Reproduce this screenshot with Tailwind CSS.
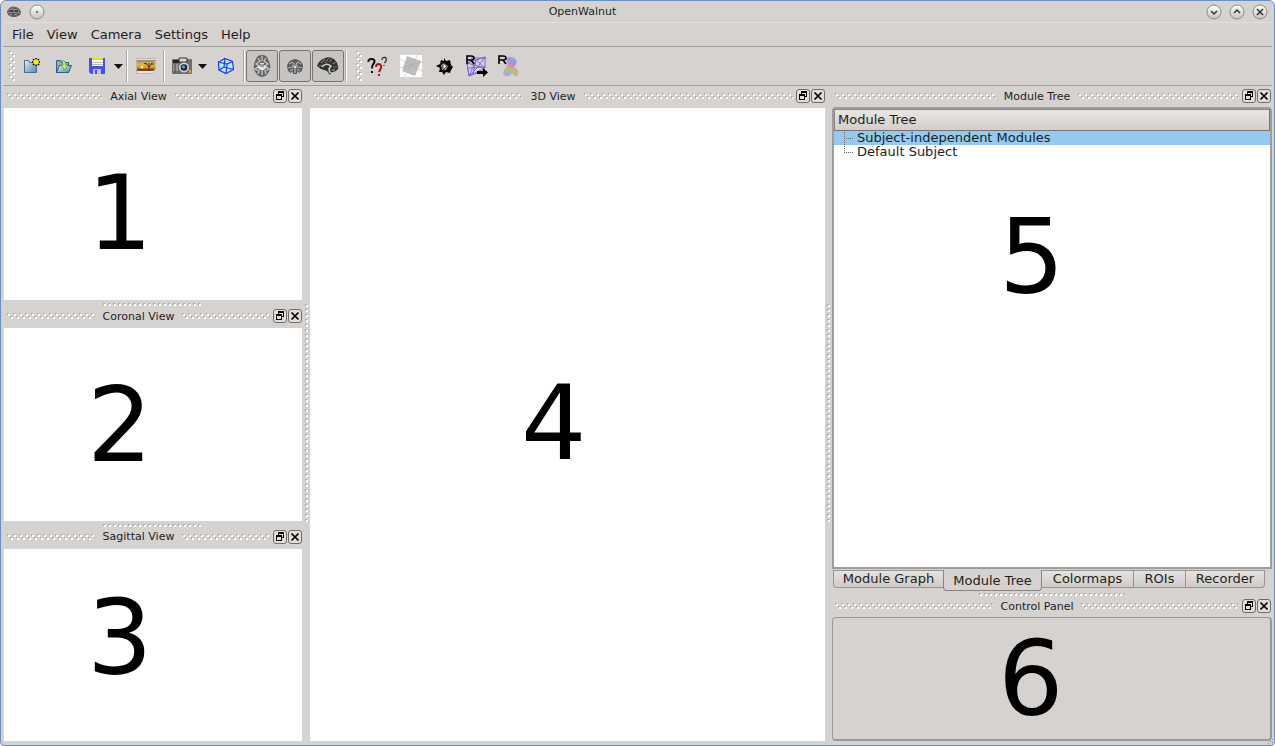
<!DOCTYPE html>
<html lang="en">
<head>
<meta charset="utf-8">
<title>OpenWalnut</title>
<script src="https://cdn.jsdelivr.net/npm/@tailwindcss/browser@4"></script>
</head>
<body class="h-screen overflow-hidden bg-white font-['DejaVu_Sans',sans-serif] text-[13px] text-[#221e1e]">
<svg class="absolute size-0" aria-hidden="true">
  <defs>
    <pattern id="grip" width="6" height="6" patternUnits="userSpaceOnUse">
      <path d="M0 0h2v2H0zM3 3h2v2H3z" fill="#b4b0ad"/><path d="M1 1h2v2H1zM4 4h2v2H4z" fill="#fff"/>
    </pattern>
    <pattern id="dots" width="5" height="5" patternUnits="userSpaceOnUse">
      <path d="M0 0h2v2H0z" fill="#b0aca9"/><path d="M1 1h2v2H1z" fill="#fff"/>
    </pattern>
    <linearGradient id="ball" x2="0" y2="1"><stop stop-color="#fff"/><stop offset="1" stop-color="#c4c0bd"/></linearGradient>
    <linearGradient id="folder" x2="1" y2="1"><stop stop-color="#e6eef4"/><stop offset="1" stop-color="#5d86a8"/></linearGradient>
    <linearGradient id="sunset" x2="0" y2="1"><stop stop-color="#8d8a7c"/><stop offset=".5" stop-color="#e8b050"/><stop offset=".85" stop-color="#e0901c"/><stop offset="1" stop-color="#8a5a20"/></linearGradient>
    <linearGradient id="glyph" x1=".8" y1="0" x2=".4" y2="1"><stop stop-color="#8fe0b0"/><stop offset=".25" stop-color="#8f9ae8"/><stop offset=".5" stop-color="#d88ab0"/><stop offset=".7" stop-color="#a8c878"/><stop offset="1" stop-color="#b8a0e0"/></linearGradient>
    <symbol id="float" viewBox="0 0 14 14"><rect x=".5" y=".5" width="13" height="13" rx="2.500" fill="#e0ddda" stroke="#6f6c6a"/><path d="M5 2h6v6H9V7h1V4H6v1H5zM3 5h6v6H3zM4 7v3h4V7z" fill="#000" fill-rule="evenodd"/></symbol>
    <symbol id="close" viewBox="0 0 14 14"><rect x=".5" y=".5" width="13" height="13" rx="2.500" fill="#e0ddda" stroke="#6f6c6a"/><path d="M3.500 3.500l7 7M10.500 3.500l-7 7" fill="none" stroke="#000" stroke-width="1.700"/></symbol>
  </defs>
</svg>
<div class="relative flex h-full flex-col rounded-t-md rounded-b-sm border border-[#6b8fc3] bg-[#d6d2cf] px-[2px] pb-1">
  <header class="relative flex h-[22px] shrink-0 items-center justify-center border-b border-[#e2dfdc] pt-[1px] pr-[110px] text-[11px]">
    <div class="absolute inset-y-0 left-1 flex items-center gap-2">
      <svg class="size-[14px]" viewBox="0 0 14 14"><path d="M0 7Q1 3 5 1.500Q10 1 12.500 4Q15 7 13 10L9 12H5L1 10Z" fill="#605d5b"/><path d="M2 5l3-1 2 1 3-1 2 2M1 8l3-1 3 1 3-1 3 1M3 10l3-1 4 1M6 2v3" stroke="#9a9692" fill="none"/><path d="M3 6h3M8 6h3M5 9h2" stroke="#222"/></svg>
      <button aria-label="Window menu" class="size-4"><svg viewBox="0 0 16 16"><circle cx="8" cy="8" r="7" fill="url(#ball)" stroke="#8c8986"/><path d="M7 7h2v2H7z" fill="#777"/></svg></button>
    </div>
    <h1>OpenWalnut</h1>
    <div class="absolute inset-y-0 right-1 flex items-center gap-[7px]">
      <button aria-label="Minimize" class="size-4"><svg viewBox="0 0 16 16"><circle cx="8" cy="8" r="7" fill="url(#ball)" stroke="#8c8986"/><path d="M5 7l3 3 3-3" fill="none" stroke="#333" stroke-width="1.500"/></svg></button>
      <button aria-label="Maximize" class="size-4"><svg viewBox="0 0 16 16"><circle cx="8" cy="8" r="7" fill="url(#ball)" stroke="#8c8986"/><path d="M5 9l3-3 3 3" fill="none" stroke="#333" stroke-width="1.500"/></svg></button>
      <button aria-label="Close" class="size-4"><svg viewBox="0 0 16 16"><circle cx="8" cy="8" r="7" fill="url(#ball)" stroke="#8c8986"/><path d="M5 5l6 6M11 5l-6 6" fill="none" stroke="#333" stroke-width="1.500"/></svg></button>
    </div>
  </header>
  <nav class="flex h-6 shrink-0 items-center gap-[13px] border-b border-[#a5a19e] px-[9px]">
    <button>File</button><button>View</button><button>Camera</button><button>Settings</button><button>Help</button>
  </nav>
  <div role="toolbar" aria-label="Main toolbar" class="flex h-[39px] shrink-0 items-center border-b border-[#a5a19e]">
    <svg class="ml-[6px] mr-[1px] h-[30px] w-[6px]"><rect width="6" height="30" fill="url(#grip)"/></svg>
    <button aria-label="New" class="grid size-8 place-items-center"><svg class="size-[18px]" viewBox="0 0 18 18"><path d="M1.500 15.500v-12h4l1 2h7v10z" fill="url(#folder)" stroke="#3e6f91"/><path d="M9 5h8M13 1v8M10 2l6 6M16 2l-6 6" stroke="#000" stroke-width="1.500"/><path d="M10 5h6M13 2v6M11 3l4 4M15 3l-4 4" stroke="#fff200" stroke-width="1.300"/></svg></button>
    <button aria-label="Open" class="grid size-8 place-items-center"><svg class="size-[18px]" viewBox="0 0 18 18"><path d="M1.500 15.500v-12h4l1 2h7v10z" fill="#8fb0c6" stroke="#2d5f80"/><path d="M1.500 15.500l3-7h12l-3 7z" fill="url(#folder)" stroke="#2d5f80"/><path d="M6 4q5-1 5 4h2l-3.500 5L6 8h2q0-3-2-4z" fill="#b8f26a" stroke="#4b873a" stroke-width=".7"/></svg></button>
    <button aria-label="Save" class="grid h-8 w-[33px] place-items-center"><svg class="size-4" viewBox="0 0 16 16"><path d="M0 0h16v16H2l-2-2z" fill="#4450f0"/><path d="M3 0h11v8H3z" fill="#fff"/><path d="M3 0h11v2H3z" fill="#eee000"/><path d="M3 4.500h11M3 6.500h11" stroke="#bbb"/><path d="M4 11h8v5H4z" fill="#c4c4c8"/><path d="M6 12h2v4H6z" fill="#4450f0"/></svg></button>
    <button aria-label="Save options" class="grid h-8 w-[11px] place-items-center"><svg class="h-[5px] w-[9px]" viewBox="0 0 9 5"><path d="M0 0h9L4.500 5z" fill="#111"/></svg></button>
    <span class="mx-[2px] h-8 w-[2px] border-l border-[#aaa6a3] bg-white"></span>
    <button aria-label="Load image" class="grid size-8 place-items-center"><svg class="h-4 w-5" viewBox="0 0 20 16"><path d="M.5.5h19v11l-3 4H.5z" fill="#e8e3d7" stroke="#bdb9b1"/><path d="M1 2h18v9H1z" fill="url(#sunset)"/><path d="M1 11h18l-2 2H1z" fill="#6b4a24"/><path d="M13 12V8M13 9l-3-4M13 9l3-4M11 6L8 5.500M15 6h3M13 8V5" stroke="#40301c" stroke-width=".9" fill="none"/><circle cx="6" cy="9" r="1.500" fill="#ffe88a"/></svg></button>
    <span class="mx-[1px] h-8 w-[2px] border-l border-[#aaa6a3] bg-white"></span>
    <button aria-label="Screenshot" class="grid h-8 w-[31px] place-items-center"><svg class="h-[18px] w-5" viewBox="0 0 20 18"><rect y="2" width="20" height="15" rx="1" fill="#6e706f"/><path d="M1 3h6v3H1z" fill="#222"/><path d="M7 1h8v4H7z" fill="#d8d8d5" stroke="#333"/><path d="M1 7h5v7H1z" fill="#989a99"/><circle cx="12" cy="10.500" r="5" fill="#d0d2d3"/><circle cx="12" cy="10.500" r="3.300" fill="#182838"/><circle cx="11.500" cy="10" r="1.600" fill="#6ca0d0"/><path d="M17 13h2v3h-2z" fill="#e7a426"/><path d="M3 7v9" stroke="#444"/></svg></button>
    <button aria-label="Screenshot options" class="grid h-8 w-[11px] place-items-center"><svg class="h-[5px] w-[9px]" viewBox="0 0 9 5"><path d="M0 0h9L4.500 5z" fill="#111"/></svg></button>
    <button aria-label="Reset view" class="ml-[2px] grid size-8 place-items-center"><svg class="h-[18px] w-[18px]" viewBox="0 0 18 18"><path d="M8 1.500l7.500 3 1 8L9 16.500 2 13 1.500 5z" fill="#a9f4ff" stroke="#2530ff" stroke-width="1.200"/><path d="M1.500 5L10 7l5.500-2.500M10 7l-1 9.500M8 1.500L7 10l-5 3M7 10l9.500 2.500" fill="none" stroke="#2530ff" stroke-width="1.200"/></svg></button>
    <span class="mx-[1px] h-8 w-[2px] border-l border-[#aaa6a3] bg-white"></span>
    <div class="flex gap-[1px]">
      <button aria-label="Axial slice" aria-pressed="true" class="grid size-8 place-items-center rounded-[3px] border border-[#777471] bg-[#c8c4c1]"><svg class="h-[22px] w-[18px]" viewBox="0 0 18 22"><path d="M9 0Q14 0 15 4Q18 9 17 14Q15 21 9 22Q3 21 1 14Q0 9 3 4Q4 0 9 0Z" fill="#666"/><path d="M9 1v5M5 3l2 3-4 3 3 2-4 3 4 2-1 3M13 3l-2 3 4 3-3 2 4 3-4 2 1 3M9 13v7" fill="none" stroke="#c9c9c9" stroke-width="1.300"/><path d="M7 8h4v2l3 2-3 3H7l-3-3 3-2z" fill="#e2e2e2"/><path d="M8 9v3M10 9v3" stroke="#555"/></svg></button>
      <button aria-label="Coronal slice" aria-pressed="true" class="grid size-8 place-items-center rounded-[3px] border border-[#777471] bg-[#c8c4c1]"><svg class="h-[15px] w-[18px]" viewBox="0 0 18 15"><path d="M1 7Q2 2 6 1Q9-1 12 1Q16 2 17 7L16 12l-3 2-2-2v3H7v-3l-2 2-3-2z" fill="#5a5a5a"/><path d="M3 5l3-2 2 2-2 3-4 1M15 5l-3-2-2 2 2 3 4 1M4 12l3-2M14 12l-3-2" stroke="#aaa" stroke-width="1.200" fill="none"/><path d="M8 7h2v2H8zM9 10v4" fill="#fff" stroke="#ccc"/></svg></button>
      <button aria-label="Sagittal slice" aria-pressed="true" class="grid size-8 place-items-center rounded-[3px] border border-[#777471] bg-[#c8c4c1]"><svg class="h-[18px] w-[22px]" viewBox="0 0 22 18"><path d="M0 9Q2 3 8 1Q14-1 18 3Q22 7 21 12Q18 16 14 15l-1 3-3-4-6-2z" fill="#303030"/><path d="M4 6l4-4M8 6l4-5M12 5l3-3M15 7l4-2M16 10l4 0M2 9l4-1" stroke="#777" stroke-width="1.100"/><path d="M5 10Q9 5 14 9l-2 3 1 4" fill="none" stroke="#ccc" stroke-width="1.600"/><path d="M14 13l4-1-1 2z" fill="#aaa"/></svg></button>
    </div>
    <span class="mx-[1px] h-8 w-[2px] border-l border-[#aaa6a3] bg-white"></span>
    <svg class="ml-2 h-[30px] w-[6px]"><rect width="6" height="30" fill="url(#grip)"/></svg>
    <button aria-label="What's this" class="grid h-8 w-[31px] place-items-center"><svg class="h-[21px] w-[21px]" viewBox="0 0 21 21" fill="none"><path d="M1.500 6Q1 3 4.500 3Q8 3 7.500 6Q5 9 5 12.500M5 15v2" stroke="#111" stroke-width="2"/><path d="M9 11Q9 8 12 8Q15 9 14 12L12 16M12 18v2" stroke="#a01920" stroke-width="2"/><path d="M15 4Q15 1 18 1.500Q20 2 19 5L17.500 7M17 9v1" stroke="#333" stroke-width="1.300"/></svg></button>
    <button aria-label="Slices" class="ml-[2px] grid size-8 place-items-center"><svg class="size-[22px]" viewBox="0 0 22 22"><path d="M0 0h22v22H0z" fill="#fff"/><path d="M7 1l14 5-6 15-13-5z" fill="#bcbcbc"/><path d="M0 13l22-6M4 22L18 0M0 4l22 12" stroke="#aaa" stroke-width=".5"/></svg></button>
    <button aria-label="Mesh" class="ml-[1px] grid size-8 place-items-center"><svg class="size-[17px]" viewBox="0 0 17 17"><path d="M8 0l2 3 4-1 1 5 2 2-2 3-1 3-4-1-2 3-2-3H3l1-4-4-2 4-2 1-4 3 1z" fill="#050505"/><path d="M5 7l3-2 4 3-2 4-4 0z" fill="#999"/><path d="M7 5v7l4-4z" fill="#eee" stroke="#111" stroke-width=".7"/></svg></button>
    <button aria-label="Render mesh" class="ml-[1px] grid size-8 place-items-center"><svg class="size-[22px]" viewBox="0 0 22 22" fill="none"><path d="M1 8l18-6v11L3 21zM5 3l15 0M3 21L10 5l9 8-18-5 18-6M7 19l3-14M3 13l16-1M3 21l8-8 8-11M1 8l2 13 16-6" stroke="#8168cf"/><path d="M1 9V1h4q3 0 3 2t-3 2H1M5 5l3 4" stroke="#000" stroke-width="1.600"/><path d="M11 16h6v-3l5 4.500L17 22v-3h-6z" fill="#000"/></svg></button>
    <button aria-label="Render glyphs" class="grid size-8 place-items-center"><svg class="size-[22px]" viewBox="0 0 22 22" fill="none"><path d="M8 4Q13-1 18 4Q20 8 16 12Q22 16 20 20Q17 23 14 18Q12 22 7 21Q3 18 8 12Q11 9 8 4Z" fill="url(#glyph)"/><path d="M16 14l3 5" stroke="#e8b060" stroke-width="2" opacity=".6"/><path d="M1 9V1h4q3 0 3 2t-3 2H1M5 5l3 4" stroke="#000" stroke-width="1.600"/></svg></button>
  </div>

  <main class="flex min-h-0 flex-1">
    <div class="ml-[1px] flex w-[298px] shrink-0 flex-col">
      <section class="flex min-h-0 flex-1 flex-col">
        <div class="mb-[2px] flex h-5 shrink-0 items-center text-[11px]"><svg class="ml-[3px] h-[6px] min-w-0 flex-1"><rect width="100%" height="6" fill="url(#grip)"/></svg><h2 class="px-2 pt-[2px]">Axial View</h2><svg class="mr-[3px] h-[6px] min-w-0 flex-1"><rect width="100%" height="6" fill="url(#grip)"/></svg><button aria-label="Float Axial View" class="mr-[1px]"><svg class="size-[14px]"><use href="#float"/></svg></button><button aria-label="Close Axial View"><svg class="size-[14px]"><use href="#close"/></svg></button></div>
        <div class="min-h-0 flex-1 overflow-hidden bg-white pt-[54px] pl-[83px] text-[103px] leading-[103px] text-black">1</div>
      </section>
      <div class="flex h-[6px] shrink-0 items-end justify-center"><svg class="h-[3px] w-1/3"><rect width="100%" height="3" fill="url(#dots)"/></svg></div>
      <section class="flex min-h-0 flex-1 flex-col">
        <div class="mb-[2px] flex h-5 shrink-0 items-center text-[11px]"><svg class="ml-[3px] h-[6px] min-w-0 flex-1"><rect width="100%" height="6" fill="url(#grip)"/></svg><h2 class="px-2 pt-[2px]">Coronal View</h2><svg class="mr-[3px] h-[6px] min-w-0 flex-1"><rect width="100%" height="6" fill="url(#grip)"/></svg><button aria-label="Float Coronal View" class="mr-[1px]"><svg class="size-[14px]"><use href="#float"/></svg></button><button aria-label="Close Coronal View"><svg class="size-[14px]"><use href="#close"/></svg></button></div>
        <div class="min-h-0 flex-1 overflow-hidden bg-white pt-[46px] pl-[83px] text-[103px] leading-[103px] text-black">2</div>
      </section>
      <div class="flex h-[6px] shrink-0 items-end justify-center"><svg class="h-[3px] w-1/3"><rect width="100%" height="3" fill="url(#dots)"/></svg></div>
      <section class="flex min-h-0 flex-1 flex-col">
        <div class="mb-[2px] flex h-5 shrink-0 items-center text-[11px]"><svg class="ml-[3px] h-[6px] min-w-0 flex-1"><rect width="100%" height="6" fill="url(#grip)"/></svg><h2 class="px-2 pt-[2px]">Sagittal View</h2><svg class="mr-[3px] h-[6px] min-w-0 flex-1"><rect width="100%" height="6" fill="url(#grip)"/></svg><button aria-label="Float Sagittal View" class="mr-[1px]"><svg class="size-[14px]"><use href="#float"/></svg></button><button aria-label="Close Sagittal View"><svg class="size-[14px]"><use href="#close"/></svg></button></div>
        <div class="min-h-0 flex-1 overflow-hidden bg-white pt-[38px] pl-[83px] text-[103px] leading-[103px] text-black">3</div>
      </section>
    </div>
    <div class="flex w-2 shrink-0 items-center justify-center"><svg class="h-1/3 w-[3px]"><rect width="3" height="100%" fill="url(#dots)"/></svg></div>
    <section class="flex min-w-0 flex-1 flex-col">
      <div class="mb-[2px] flex h-5 shrink-0 items-center text-[11px]"><svg class="ml-[3px] h-[6px] min-w-0 flex-1"><rect width="100%" height="6" fill="url(#grip)"/></svg><h2 class="px-2 pt-[2px]">3D View</h2><svg class="mr-[3px] h-[6px] min-w-0 flex-1"><rect width="100%" height="6" fill="url(#grip)"/></svg><button aria-label="Float 3D View" class="mr-[1px]"><svg class="size-[14px]"><use href="#float"/></svg></button><button aria-label="Close 3D View"><svg class="size-[14px]"><use href="#close"/></svg></button></div>
      <div class="min-h-0 flex-1 overflow-hidden bg-white pt-[264px] pl-[211px] text-[103px] leading-[103px] text-black">4</div>
    </section>
    <div class="flex w-[7px] shrink-0 items-center justify-center"><svg class="h-1/3 w-[3px]"><rect width="3" height="100%" fill="url(#dots)"/></svg></div>
    <div class="flex w-[440px] shrink-0 flex-col">
      <section class="flex min-h-0 flex-1 flex-col">
        <div class="mb-[1px] flex h-5 shrink-0 items-center text-[11px]"><svg class="ml-[3px] h-[6px] min-w-0 flex-1"><rect width="100%" height="6" fill="url(#grip)"/></svg><h2 class="px-2 pt-[2px]">Module Tree</h2><svg class="mr-[3px] h-[6px] min-w-0 flex-1"><rect width="100%" height="6" fill="url(#grip)"/></svg><button aria-label="Float Module Tree" class="mr-[1px]"><svg class="size-[14px]"><use href="#float"/></svg></button><button aria-label="Close Module Tree" class="mr-[1px]"><svg class="size-[14px]"><use href="#close"/></svg></button></div>
        <div class="flex min-h-0 flex-1 flex-col rounded-t-sm border-2 border-[#a09c99] bg-white">
          <div class="flex h-[22px] shrink-0 items-center border border-t-[#8a8784] border-r-[#777471] border-b-[#777471] border-l-[#8a8784] bg-linear-to-b from-[#e9e6e3] to-[#d2cecb] px-[3px]">Module Tree</div>
          <ul role="tree" aria-label="Module Tree" class="leading-[14px]">
            <li role="treeitem" aria-selected="true" class="flex h-[14px] bg-[#94caef]"><svg class="ml-[10px] h-[14px] w-[13px]" viewBox="0 0 13 14"><path d="M.5 1v13M2 7.500h8" fill="none" stroke="#666" stroke-dasharray="1 1"/></svg><span>Subject-independent Modules</span></li>
            <li role="treeitem" aria-selected="false" class="flex h-[14px]"><svg class="ml-[10px] h-[14px] w-[13px]" viewBox="0 0 13 14"><path d="M.5 1v7M2 7.500h8" fill="none" stroke="#666" stroke-dasharray="1 1"/></svg><span>Default Subject</span></li>
          </ul>
          <div class="min-h-0 flex-1 pt-[47px] pl-[165px] text-[103px] leading-[103px] text-black">5</div>
        </div>
        <div role="tablist" class="flex h-[22px] shrink-0 items-start pt-[1px] pl-[1px]">
          <button role="tab" aria-selected="false" class="h-[18px] w-[110px] rounded-bl-sm border border-r-0 border-[#999592] bg-linear-to-b from-[#e6e3e0] to-[#cfcbc8] leading-4">Module Graph</button>
          <button role="tab" aria-selected="true" class="h-[21px] w-[99px] rounded-b-sm border border-t-0 border-[#888481] pt-[1px] leading-4">Module Tree</button>
          <button role="tab" aria-selected="false" class="h-[18px] w-[92px] border border-l-0 border-[#999592] bg-linear-to-b from-[#e6e3e0] to-[#cfcbc8] leading-4">Colormaps</button>
          <button role="tab" aria-selected="false" class="h-[18px] w-[52px] border border-l-0 border-[#999592] bg-linear-to-b from-[#e6e3e0] to-[#cfcbc8] leading-4">ROIs</button>
          <button role="tab" aria-selected="false" class="h-[18px] w-[79px] rounded-br-sm border border-l-0 border-[#999592] bg-linear-to-b from-[#e6e3e0] to-[#cfcbc8] leading-4">Recorder</button>
        </div>
      </section>
      <div class="flex h-[5px] shrink-0 items-end justify-center"><svg class="h-[3px] w-1/3"><rect width="100%" height="3" fill="url(#dots)"/></svg></div>
      <section class="flex shrink-0 flex-col">
        <div class="mb-[1px] flex h-5 shrink-0 items-center text-[11px]"><svg class="ml-[3px] h-[6px] min-w-0 flex-1"><rect width="100%" height="6" fill="url(#grip)"/></svg><h2 class="px-2 pt-[2px]">Control Panel</h2><svg class="mr-[3px] h-[6px] min-w-0 flex-1"><rect width="100%" height="6" fill="url(#grip)"/></svg><button aria-label="Float Control Panel" class="mr-[1px]"><svg class="size-[14px]"><use href="#float"/></svg></button><button aria-label="Close Control Panel" class="mr-[1px]"><svg class="size-[14px]"><use href="#close"/></svg></button></div>
        <div class="rounded-sm border border-r-2 border-b-2 border-[#9c9895] pt-[10px] pb-2 pl-[165px] text-[103px] leading-[103px] text-black">6</div>
      </section>
    </div>
  </main>
  <svg class="absolute right-0 bottom-0 size-[6px]" viewBox="0 0 6 6" aria-hidden="true"><path d="M4 0h1v1H4zM2 2h1v1H2zM4 3h1v1H4zM0 4h1v1H0z" fill="#8c8986"/></svg>
</div>
</body>
</html>
